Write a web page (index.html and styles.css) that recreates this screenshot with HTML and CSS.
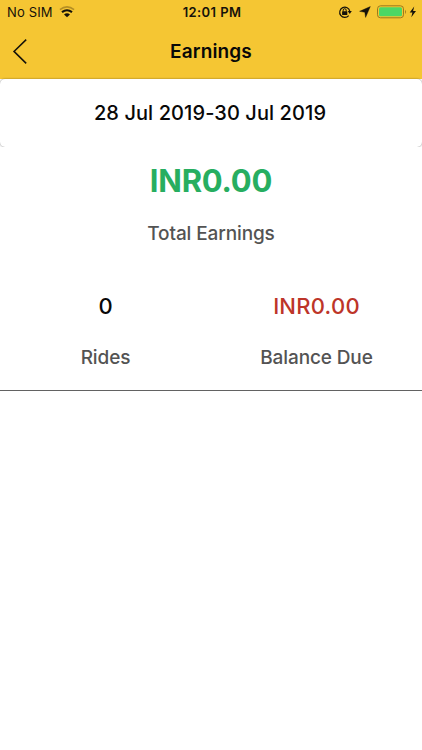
FILE: index.html
```html
<!DOCTYPE html>
<html lang="en">
<head>
<meta charset="utf-8">
<title>Earnings</title>
<link rel="stylesheet" href="styles.css">
</head>
<body>
<header class="top">
  <div class="status">
    <div class="carrier"><span>No SIM</span>
      <svg class="wifi" width="16" height="12" viewBox="0 0 16 12"><path d="M.9 3.6Q8-1.8 15.1 3.6" fill="none" stroke="#b58f24" stroke-width="1.7"/><path d="M3 6.2Q8 2.3 13 6.2" fill="none" stroke="#15120a" stroke-width="2.1"/><path d="M5 8.5Q8 6 11 8.5L8 11.3Z" fill="#15120a"/></svg>
    </div>
    <span class="time">12:01 PM</span>
    <div class="indicators">
      <svg width="14" height="14" viewBox="0 0 14 14"><path d="M10.7 10.6A5.1 5.1 0 1 1 11.8 6.3" fill="none" stroke="#15120a" stroke-width="1.2"/><path d="M9.7 6.1H13.8L11.8 8.9Z" fill="#15120a"/><rect x="4.1" y="6.2" width="5.2" height="3.8" rx=".5" fill="#15120a"/><path d="M5.2 6.5V5.2a1.5 1.5 0 0 1 3 0V6.5" fill="none" stroke="#15120a"/></svg>
      <svg class="arrow" width="12" height="12" viewBox="0 0 12 12"><path d="M11.3 .6L6.6 11.4L5.8 6.3L.6 5.3Z" fill="#15120a" stroke="#15120a" stroke-width=".4"/></svg>
      <svg class="battery" width="40" height="14" viewBox="0 0 40 14"><rect x=".5" y=".8" width="26" height="12" rx="3" fill="none" stroke="#9b7a1e"/><rect x="2" y="2.3" width="23" height="9" rx="1.5" fill="#4cd765"/><path d="M28.1 4.7Q30 6.8 28.1 8.9Z" fill="#9b7a1e"/><path d="M37.2 1.4L32.7 7.5H35.4L34.3 12.2L39 5.9H36.1Z" fill="#15120a"/></svg>
    </div>
  </div>
  <nav class="nav">
    <svg class="back" width="15" height="26" viewBox="0 0 15 26"><path d="M14.2 .6L2 12.4L14.2 24.4" fill="none" stroke="#15120a" stroke-width="1.5"/></svg>
    <h1>Earnings</h1>
    <span></span>
  </nav>
</header>
<main>
  <div class="card"><span class="dates">28 Jul 2019-30 Jul 2019</span></div>
  <section class="total">
    <div class="amount">INR0.00</div>
    <div class="label total-label">Total Earnings</div>
  </section>
  <section class="stats">
    <div><div class="value">0</div><div class="label rides">Rides</div></div>
    <div><div class="value due">INR0.00</div><div class="label balance">Balance Due</div></div>
  </section>
</main>
</body>
</html>
```
FILE: styles.css
```css
* { box-sizing: border-box; }
body { margin: 0; background: #fff; color: #080808; font-family: Inter, "Liberation Sans", sans-serif; font-weight: 500; }
svg { display: block; flex: none; }
main { background: #fff; }
.top { height: 79px; background: #f5c633; }
.status { height: 24px; display: grid; grid-template-columns: 1fr auto 1fr; align-items: center; padding: 0 5px 0 7px; font-size: 13px; line-height: 24px; color: #15120a; }
.carrier { display: flex; align-items: center; gap: 6px; font-weight: 400; letter-spacing: 0.15px; }
.time { font-weight: 600; letter-spacing: 0.4px; }
.indicators { display: flex; align-items: center; justify-content: flex-end; }
.arrow { margin: 0 6px 0 7px; }
.nav { height: 55px; display: grid; grid-template-columns: 1fr auto 1fr; align-items: center; padding: 0 12px; }
h1 { margin: 0; font-size: 19px; font-weight: 600; line-height: 55px; letter-spacing: 0.15px; }
.card { height: 68px; border-radius: 5px; background: #fff; display: flex; align-items: center; justify-content: center; padding-right: 2px; box-shadow: 0 0 2px rgba(0,0,0,.5); clip-path: inset(-3px 0 0 0); }
.dates { font-size: 20px; line-height: 24px; letter-spacing: 0.09px; }
.total { height: 124px; text-align: center; padding-top: 14px; }
.amount { color: #27ae60; font-size: 31px; font-weight: 700; line-height: 40px; letter-spacing: -0.2px; }
.label { color: #535353; font-size: 19px; line-height: 24px; letter-spacing: -0.12px; }
.total-label { margin-top: 21px; }
.stats { height: 120px; display: grid; grid-template-columns: 1fr 1fr; text-align: center; padding-top: 21px; border-bottom: 1px solid #626262; }
.value { font-size: 22px; line-height: 28px; }
.due { color: #bd3529; letter-spacing: 0.25px; }
.rides, .balance { margin-top: 26px; }
```
